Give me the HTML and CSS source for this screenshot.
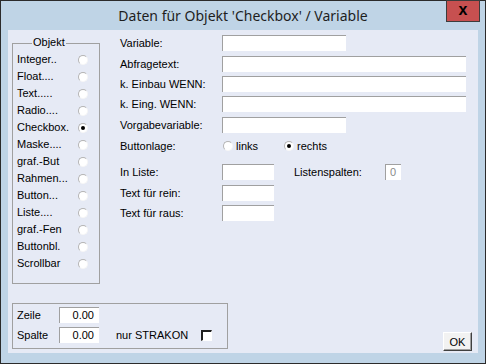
FILE: index.html
```html
<!DOCTYPE html>
<html lang="de">
<head>
  <meta charset="UTF-8">
  <title>Daten für Objekt 'Checkbox' / Variable</title>
  <link rel="stylesheet" href="styles.css">
</head>
<body>
  <div class="window">
    <div class="titlebar">
      <span class="title">Daten für Objekt 'Checkbox' / Variable</span>
      <button class="close">x</button>
    </div>

    <div class="client">
      <div class="top">
        <!-- Objekt-Auswahl -->
        <div class="group objekt">
          <span class="legend">Objekt</span>
          <div class="opt"><span>Integer..</span><i class="radio"></i></div>
          <div class="opt"><span>Float....</span><i class="radio"></i></div>
          <div class="opt"><span>Text.....</span><i class="radio"></i></div>
          <div class="opt"><span>Radio....</span><i class="radio"></i></div>
          <div class="opt"><span>Checkbox.</span><i class="radio on"></i></div>
          <div class="opt"><span>Maske....</span><i class="radio"></i></div>
          <div class="opt"><span>graf.-But</span><i class="radio"></i></div>
          <div class="opt"><span>Rahmen...</span><i class="radio"></i></div>
          <div class="opt"><span>Button...</span><i class="radio"></i></div>
          <div class="opt"><span>Liste....</span><i class="radio"></i></div>
          <div class="opt"><span>graf.-Fen</span><i class="radio"></i></div>
          <div class="opt"><span>Buttonbl.</span><i class="radio"></i></div>
          <div class="opt"><span>Scrollbar</span><i class="radio"></i></div>
        </div>

        <!-- Variablen-Daten -->
        <div class="form">
          <div class="row"><label>Variable:</label><span class="field short"></span></div>
          <div class="row sp"><label>Abfragetext:</label><span class="field wide"></span></div>
          <div class="row"><label>k. Einbau WENN:</label><span class="field wide"></span></div>
          <div class="row"><label>k. Eing. WENN:</label><span class="field wide"></span></div>
          <div class="row sp"><label>Vorgabevariable:</label><span class="field short"></span></div>
          <div class="row sp">
            <label>Buttonlage:</label>
            <span class="choice first"><i class="radio"></i>links</span>
            <span class="choice"><i class="radio on"></i>rechts</span>
          </div>
          <div class="row big">
            <label>In Liste:</label><span class="field tiny"></span>
            <span class="lspalten">Listenspalten:</span><span class="field count">0</span>
          </div>
          <div class="row sp"><label>Text für rein:</label><span class="field tiny"></span></div>
          <div class="row"><label>Text für raus:</label><span class="field tiny"></span></div>
        </div>
      </div>

      <div class="bottom">
        <div class="group pos">
          <div class="row"><label>Zeile</label><span class="field num">0.00</span></div>
          <div class="row">
            <label>Spalte</label><span class="field num">0.00</span>
            <span class="strakon">nur STRAKON</span><i class="check"></i>
          </div>
        </div>
        <button class="ok">OK</button>
      </div>
    </div>
  </div>
</body>
</html>
```

FILE: styles.css
```css
:root {
  --frame: #bfd4e6;
  --face: #e6eaf5;
  --line: #a0a0a0;
}
* { margin:0; padding:0; box-sizing:border-box; }
body {
  font-family: "Liberation Sans", Arial, sans-serif;
  font-size: 11px; color:#000;
}
.window {
  position:relative;
  width:486px; height:364px;
  border:1px solid #2b2b2b;
  background:var(--frame);
  padding:0 7px 10px 7px;
  display:flex; flex-direction:column;
}
.titlebar {
  height:29px; margin:0 -7px;
  text-align:center; line-height:30px;
  font-family:"Noto Sans", "Liberation Sans", sans-serif;
  font-size:14px; color:#1e1e1e;
}
.close {
  position:absolute; top:-1px; right:5px;
  width:34px; height:22px;
  background:#c75050; border:1px solid #3c3c3c;
  font:bold 16px/16px "Liberation Sans", sans-serif; color:#000;
  padding-bottom:3px;
}
.client {
  flex:1; background:var(--face);
  display:flex; flex-direction:column;
  padding:0 6px 0 4px;
}
.top { display:flex; gap:20px; }

/* Gruppenrahmen */
.group { border:1px solid var(--line); position:relative; }
.legend {
  position:absolute; top:-8px; left:19px;
  padding:0 1px; background:var(--face); line-height:13px;
}
.objekt {
  margin-top:13px; width:88px; height:241px;
  padding:7px 11px 0 4px;
}
.opt {
  display:flex; justify-content:space-between; align-items:center;
  height:17px; line-height:17px;
}
.radio {
  display:inline-block; position:relative;
  width:10px; height:10px; border-radius:50%;
  background:#fff; border:1px solid;
  border-color:#b4b4b4 #f6f6f6 #f6f6f6 #b4b4b4;
}
.radio.on::after {
  content:""; position:absolute; left:2px; top:2px;
  width:4px; height:4px; border-radius:50%; background:#000;
}

/* Formular rechts */
.form { flex:1; padding-top:5px; display:flex; flex-direction:column; gap:4px; }
.row { display:flex; align-items:center; height:16px; line-height:16px; }
.row.sp { margin-top:1px; }
.row.big { margin-top:6px; }
.form label { width:102px; flex:none; }
.field {
  height:16px; background:#fff;
  border-top:1px solid var(--line); border-left:1px solid var(--line);
  line-height:15px;
}
.short { width:124px; }
.wide { width:244px; }
.tiny { width:52px; }
.choice { display:flex; align-items:center; gap:3px; width:61px; }
.choice.first { margin-left:1px; }
.lspalten { margin-left:20px; width:91px; }
.count { width:16px; padding-left:4px; color:#8a8a8a; }

/* unten */
.bottom {
  margin-top:auto;
  display:flex; justify-content:space-between; align-items:flex-end;
}
.pos {
  width:216px; height:46px; margin-bottom:4px;
  padding:3px 0 0 4px;
  display:flex; flex-direction:column; gap:4px;
}
.pos label { width:42px; }
.num { width:40px; text-align:right; padding-right:5px; }
.strakon { margin-left:17px; width:85px; }
.check {
  width:11px; height:11px; background:#fff;
  border-style:solid; border-width:2px 1px 1px 2px;
  border-color:#1e1e1e #fff #fff #1e1e1e;
}
.ok {
  width:29px; height:19px; margin-bottom:2px;
  background:#f2f2f2; font:11px "Liberation Sans", Arial, sans-serif;
  border:1px solid; border-color:#fff #404040 #404040 #fff;
  box-shadow:inset -1px -1px #a0a0a0;
}
```
